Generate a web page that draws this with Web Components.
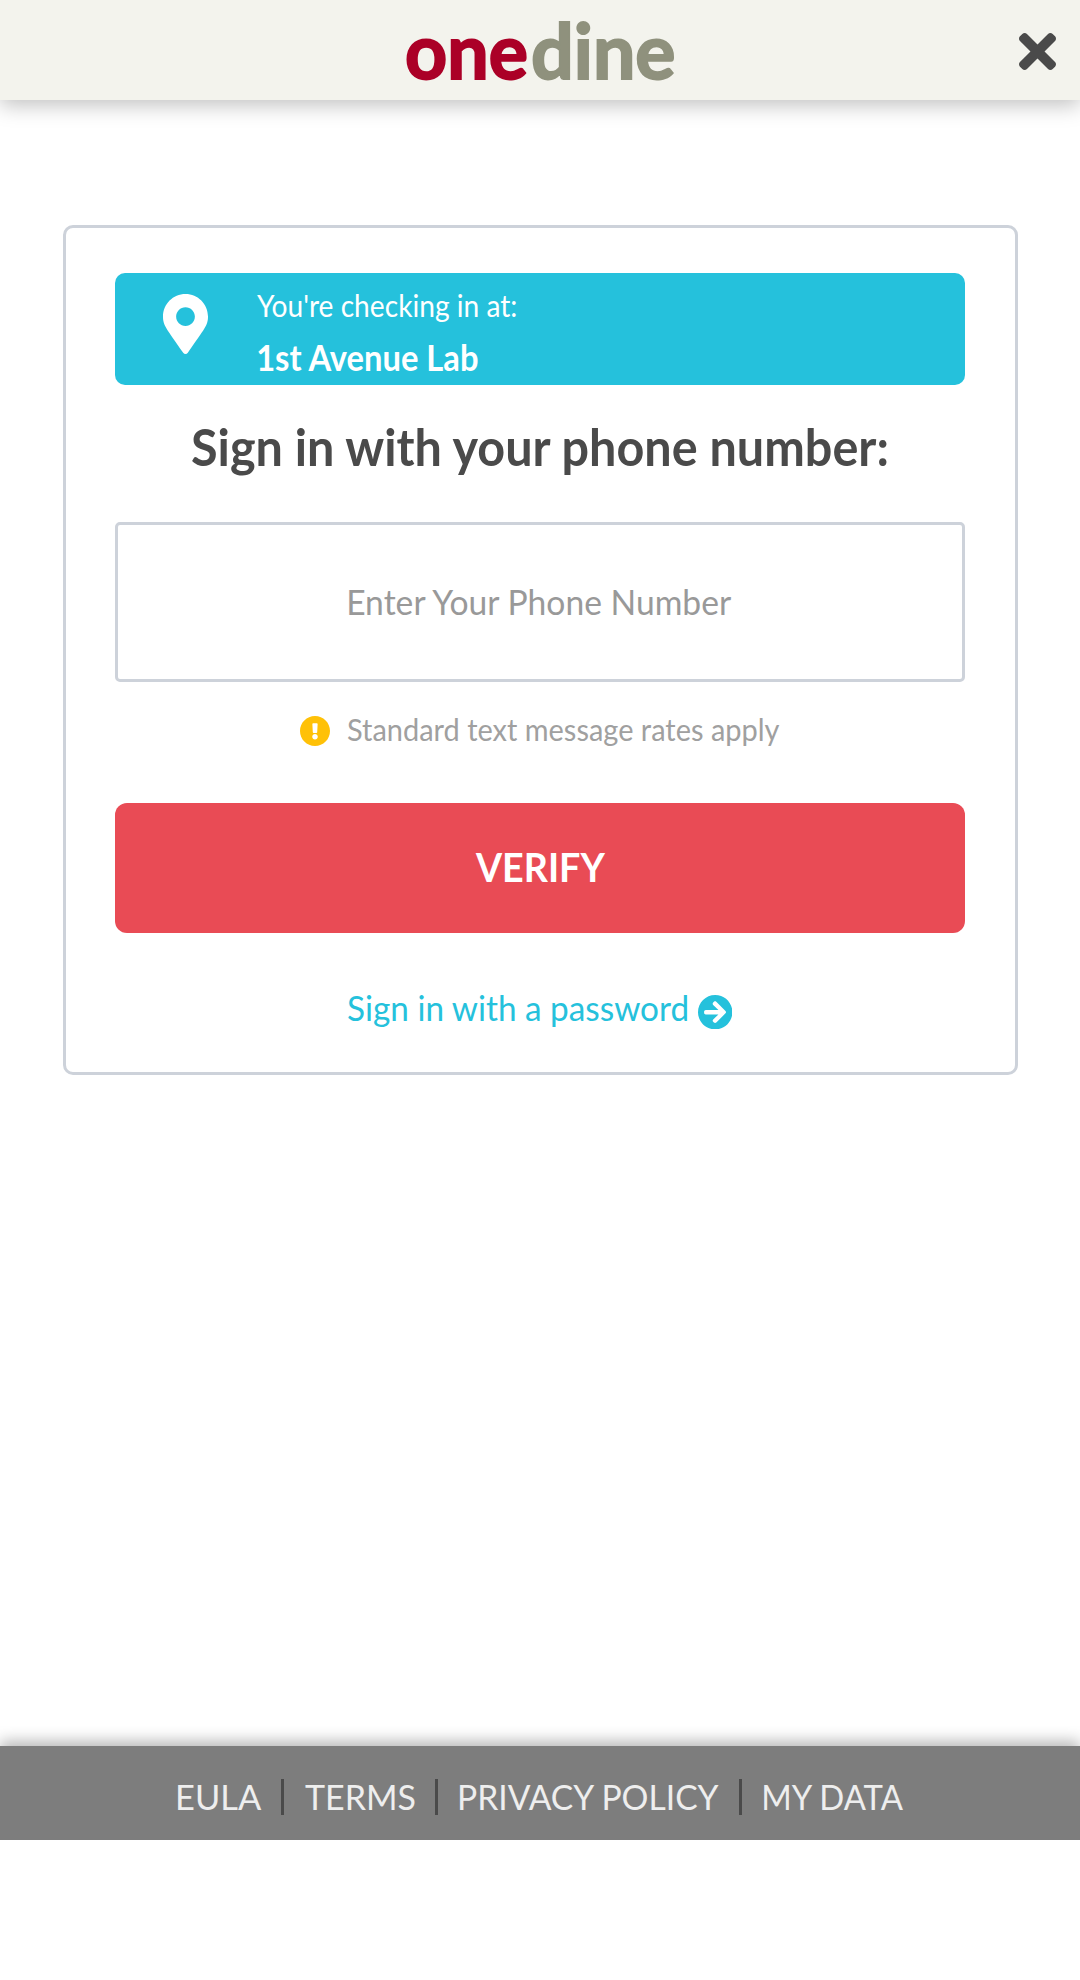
<!DOCTYPE html>
<html lang="en">
<head>
<meta charset="utf-8">
<title>OneDine</title>
<style>
  html, body { margin: 0; background: #fff; }
  body { font-family: Lato, "Open Sans", sans-serif; }
</style>
</head>
<body>
<od-app></od-app>
<script>
const define = (name, html, ready) => {
  const template = document.createElement('template');
  template.innerHTML = html;
  customElements.define(name, class extends HTMLElement {
    constructor() {
      super();
      this.attachShadow({ mode: 'open' }).append(template.content.cloneNode(true));
    }
    connectedCallback() { if (ready) ready(this); }
  });
};

/* A line of text whose box is as wide as its ink and as high as its capitals. */
define('fit-text', `
  <style>
    :host { display: block; flex: none; height: .7165em; line-height: .7165em; white-space: nowrap; }
    span { display: inline-block; line-height: inherit; transform-origin: 0 0; white-space: pre; }
  </style><span></span>`, el => {
  const span = el.shadowRoot.querySelector('span');
  const size = +el.getAttribute('size'), width = +el.getAttribute('width');
  const weight = el.getAttribute('weight') || 400;
  span.textContent = el.getAttribute('text');
  el.style.fontSize = size + 'px';
  el.style.fontWeight = weight;
  el.style.width = width + 'px';
  const ctx = document.createElement('canvas').getContext('2d');
  ctx.font = weight + ' ' + size + 'px Lato, "Open Sans", sans-serif';
  const m = ctx.measureText(span.textContent);
  const scale = width / (m.actualBoundingBoxRight + m.actualBoundingBoxLeft);
  span.style.transform = 'translate(' + m.actualBoundingBoxLeft * scale + 'px,-.029em) scaleX(' + scale + ')';
});

define('od-logo', `
  <style>
    :host { display: flex; gap: 7px; }
    fit-text { -webkit-text-stroke: 2px currentColor; stroke-linejoin: round; }
    .one { color: #ab0027; }
    .dine { color: #8f917d; }
  </style>
  <fit-text class="one" text="one" size="77" width="119" weight="700"></fit-text>
  <fit-text class="dine" text="dine" size="77" width="140.5" weight="700"></fit-text>`);

define('od-header', `
  <style>
    :host { display: grid; grid-template-columns: 1fr auto 1fr; height: 100px; background: #f3f3ed;
      box-shadow: 0 5px 20px rgba(0,0,0,.25); }
    od-logo { grid-column: 2; margin-top: 24px; }
    svg { justify-self: end; width: 37px; height: 37px; margin: 33px 24px 0 0; fill: #4a4a4a; }
  </style>
  <od-logo></od-logo>
  <svg viewBox="0 80 352 352"><path d="M242.72 256l100.07-100.07c12.28-12.28 12.28-32.19 0-44.48l-22.24-22.24c-12.28-12.28-32.19-12.28-44.48 0L176 189.28 75.93 89.21c-12.28-12.28-32.19-12.28-44.48 0L9.21 111.45c-12.28 12.28-12.28 32.19 0 44.48L109.28 256 9.21 356.07c-12.28 12.28-12.28 32.19 0 44.48l22.24 22.24c12.28 12.28 32.2 12.28 44.48 0L176 322.72l100.07 100.07c12.28 12.28 32.2 12.28 44.48 0l22.24-22.24c12.28-12.28 12.28-32.19 0-44.48L242.72 256z"/></svg>`);

define('od-location', `
  <style>
    :host { display: flex; box-sizing: border-box; height: 112px; padding: 21px 48px; gap: 49px;
      border-radius: 10px; background: #25c1dc; color: #fff; }
    svg { width: 45px; height: 60px; fill: #fff; }
    div { display: flex; flex-direction: column; gap: 29px; padding-top: 2px; }
    fit-text + fit-text { margin-left: 1px; }
  </style>
  <svg viewBox="0 0 384 512"><path d="M172.268 501.67C26.97 291.031 0 269.413 0 192 0 85.961 85.961 0 192 0s192 85.961 192 192c0 77.413-26.97 99.031-172.268 309.67-9.535 13.774-29.93 13.773-39.464 0zM192 272c44.183 0 80-35.817 80-80s-35.817-80-80-80-80 35.817-80 80 35.817 80 80 80z"/></svg>
  <div>
    <fit-text text="You're checking in at:" size="30" width="259"></fit-text>
    <fit-text text="1st Avenue Lab" size="35.5" width="220.5" weight="700"></fit-text>
  </div>`);

define('od-field', `
  <style>
    :host { display: flex; box-sizing: border-box; height: 160px; padding-top: 65px; justify-content: center;
      border: 3px solid #cdd2da; border-radius: 5px; color: #999; }
    fit-text { margin-left: 2px; }
  </style>
  <fit-text text="Enter Your Phone Number" size="35.5" width="385"></fit-text>`);

define('od-note', `
  <style>
    :host { display: flex; justify-content: center; gap: 17px; color: #a0a0a0; }
    svg { width: 30px; height: 30px; fill: #ffc107; }
    fit-text { margin-top: 4px; }
  </style>
  <svg viewBox="8 8 496 496"><path d="M504 256c0 136.997-111.043 248-248 248S8 392.997 8 256C8 119.083 119.043 8 256 8s248 111.083 248 248zm-248 50c-25.405 0-46 20.595-46 46s20.595 46 46 46 46-20.595 46-46-20.595-46-46-46zm-43.673-165.346l7.418 136c.347 6.364 5.609 11.346 11.982 11.346h48.546c6.373 0 11.635-4.982 11.982-11.346l7.418-136c.375-6.874-5.098-12.654-11.982-12.654h-63.383c-6.884 0-12.356 5.78-11.981 12.654z"/></svg>
  <fit-text text="Standard text message rates apply" size="30" width="433"></fit-text>`);

define('od-button', `
  <style>
    :host { display: flex; box-sizing: border-box; height: 130px; padding-top: 50px; justify-content: center;
      border-radius: 12px; background: #e94b55; color: #fff; }
  </style>
  <fit-text text="VERIFY" size="40.5" width="130.5" weight="700"></fit-text>`);

define('od-link', `
  <style>
    :host { display: flex; justify-content: center; gap: 10px; color: #25c1dc; }
    svg { width: 34.4px; height: 34.4px; fill: currentColor; }
    fit-text { margin-top: .5px; }
  </style>
  <fit-text text="Sign in with a password" size="35.5" width="340"></fit-text>
  <svg viewBox="8 8 496 496"><path d="M256 8c137 0 248 111 248 248S393 504 256 504 8 393 8 256 119 8 256 8zm-28.900 143.600l75.500 72.400H120c-13.300 0-24 10.700-24 24v16c0 13.300 10.700 24 24 24h182.600l-75.500 72.400c-9.700 9.300-9.900 24.800-.4 34.300l11 10.900c9.400 9.400 24.600 9.400 33.900 0L404.300 273c9.400-9.400 9.400-24.600 0-33.900L271.600 106.300c-9.400-9.400-24.600-9.400-33.900 0l-11 10.900c-9.500 9.600-9.300 25.100.4 34.400z"/></svg>`);

define('od-card', `
  <style>
    :host { display: flex; flex-direction: column; box-sizing: border-box; width: 955px; height: 850px;
      margin: 125px 62px 0 63px; padding: 45px 50px 0 49px; border: 3px solid #cdd2da; border-radius: 10px; background: #fff; }
    .title { align-self: center; height: 37px; margin: 44px 0 0 1px; color: #4a4a4a; }
    od-field { margin-top: 56px; }
    od-note { margin-top: 34px; }
    od-button { margin-top: 57px; }
    od-link { margin-top: 62px; }
  </style>
  <od-location></od-location>
  <fit-text class="title" text="Sign in with your phone number:" size="51.5" width="698" weight="700"></fit-text>
  <od-field></od-field>
  <od-note></od-note>
  <od-button></od-button>
  <od-link></od-link>`);

define('od-footer', `
  <style>
    :host { display: flex; box-sizing: border-box; height: 94px; padding: 33px 0 0 177.500px; background: #7d7d7d;
      color: #eee; box-shadow: 0 -5px 14px rgba(0,0,0,.28); clip-path: inset(-20px 0 0 0); }
    fit-text { margin-top: 6px; }
    i { width: 3px; height: 36px; background: #4a4a4a; margin: 0 20.500px 0 20px; }
    i:nth-of-type(2) { margin-right: 22px; }
    i:nth-of-type(3) { margin: 0 22px 0 19px; }
  </style>
  <fit-text text="EULA" size="35" width="83.5"></fit-text><i></i>
  <fit-text text="TERMS" size="35" width="110"></fit-text><i></i>
  <fit-text text="PRIVACY POLICY" size="35" width="260"></fit-text><i></i>
  <fit-text text="MY DATA" size="35" width="140.5"></fit-text>`);

define('od-app', `
  <style>
    :host { display: flex; flex-direction: column; height: 1980px; width: 1080px; overflow: hidden; }
    od-header, od-footer { flex: none; }
    od-card { flex: none; }
    od-footer { margin-top: 671px; }
  </style>
  <od-header></od-header>
  <od-card></od-card>
  <od-footer></od-footer>`);
</script>
</body>
</html>
